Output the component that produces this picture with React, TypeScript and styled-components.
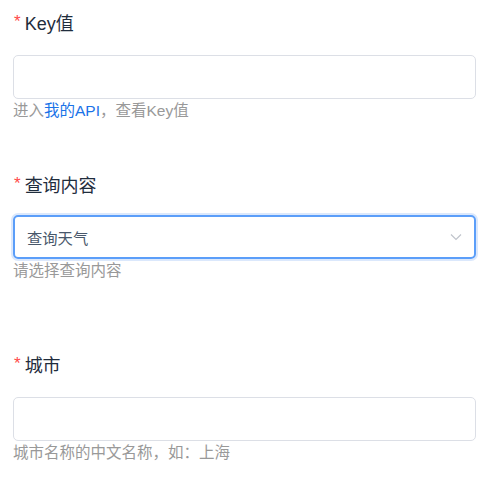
import React from "react"
import styled, { createGlobalStyle } from "styled-components"

const GlobalStyle = createGlobalStyle`
    body {
        margin: 0;
        background: #ffffff;
        font-family: "Liberation Sans", "Noto Sans CJK SC", sans-serif;
    }
`

const Form = styled.div`
    width: 463px;
    padding: 0 0 0 13px;
`

const Field = styled.div<{ gap: number }>`
    margin-bottom: ${(props) => props.gap}px;
`

const Label = styled.div<{ space: number }>`
    display: flex;
    align-items: center;
    height: 44px;
    font-size: 18px;
    color: #1f2d3d;
    margin-bottom: ${(props) => props.space}px;
`

const Star = styled.span`
    color: #ff4949;
    font-size: 17px;
    margin: 0 4px 0 1px;
`

const Input = styled.input`
    box-sizing: border-box;
    display: block;
    width: 100%;
    height: 44px;
    border: 1px solid #dcdfe6;
    border-radius: 5px;
    outline: none;
    padding: 0 13px;
    font-size: 15px;
    font-family: inherit;
    background: #fff;
`

const Select = styled.div`
    box-sizing: border-box;
    display: flex;
    align-items: center;
    justify-content: space-between;
    width: 100%;
    height: 44px;
    border: 2px solid #5b9ef9;
    border-radius: 5px;
    box-shadow: 0 0 0 2px #dbe8fc;
    padding: 0 12px 0 12px;
    font-size: 15.3px;
    color: #48576a;
`

const Chevron = styled.svg`
    width: 12px;
    height: 8px;
`

const Help = styled.div`
    font-size: 15.5px;
    line-height: 22px;
    color: #999999;
    margin-top: 1px;
`

const Link = styled.span`
    color: #1a73e8;
`

const App = () => {
    return (
        <>
            <GlobalStyle />
            <Form>
                <Field gap={40}>
                    <Label space={11}><Star>*</Star>Key值</Label>
                    <Input />
                    <Help>进入<Link>我的API</Link>，查看Key值</Help>
                </Field>
                <Field gap={60}>
                    <Label space={9}><Star>*</Star>查询内容</Label>
                    <Select>
                        <span>查询天气</span>
                        <Chevron viewBox="0 0 12 8">
                            <path d="M1 1.5 L6 6.5 L11 1.5" fill="none" stroke="#c0c4cc" strokeWidth="1.2" />
                        </Chevron>
                    </Select>
                    <Help>请选择查询内容</Help>
                </Field>
                <Field gap={0}>
                    <Label space={11}><Star>*</Star>城市</Label>
                    <Input />
                    <Help>城市名称的中文名称，如：上海</Help>
                </Field>
            </Form>
        </>
    )
}

export default App
